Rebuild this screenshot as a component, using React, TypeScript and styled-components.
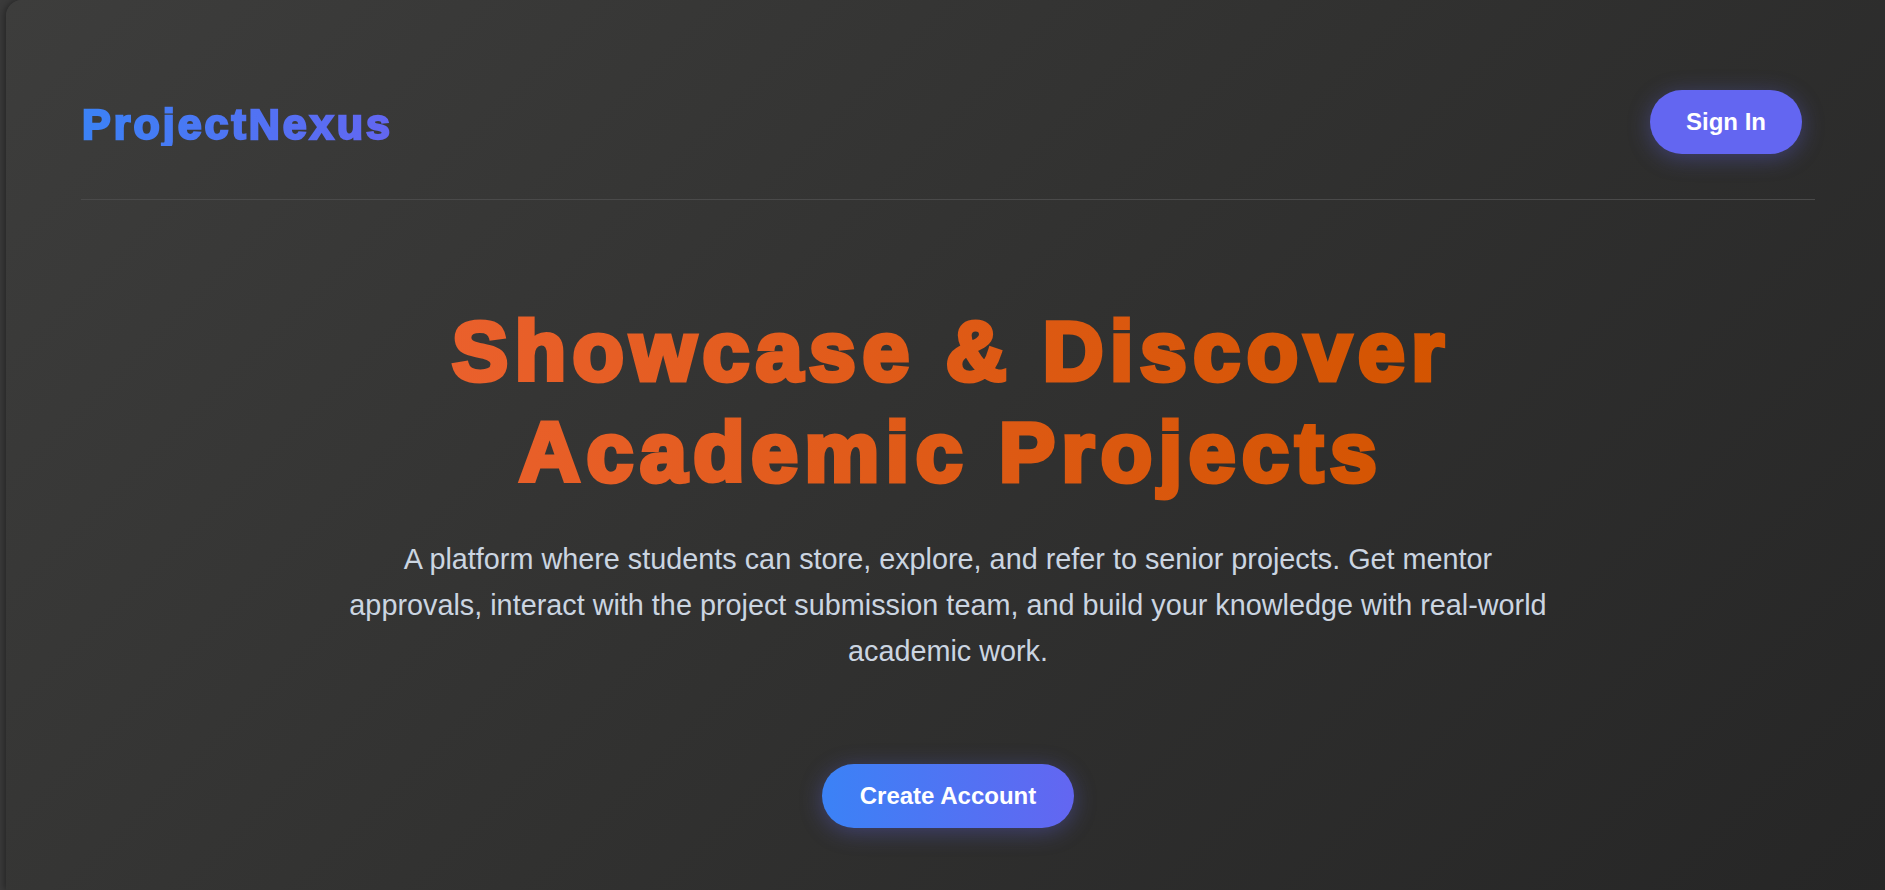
import React from "react";
import styled, { createGlobalStyle } from "styled-components";

const GlobalStyle = createGlobalStyle`
  html, body {
    margin: 0;
    padding: 0;
    overflow: hidden;
    background: #3a3a3a;
  }
  * { box-sizing: border-box; }
`;

const Page = styled.div`
  margin-left: 6px;
  width: 1885px;
  min-height: 890px;
  border-radius: 16px 0 0 0;
  background: linear-gradient(135deg, #3d3d3c 0%, #313130 50%, #262626 100%);
  box-shadow: -2px 0 6px rgba(0, 0, 0, 0.35);
  padding: 0 76px 0 75px;
  font-family: "Liberation Sans", Arial, sans-serif;
`;

const Header = styled.header`
  display: flex;
  align-items: center;
  justify-content: space-between;
  padding: 90px 13px 45px 0;
  border-bottom: 1px solid #4a4a4a;
`;

const Logo = styled.div`
  font-size: 43px;
  font-weight: 700;
  letter-spacing: 3px;
  line-height: 1;
  margin-top: 4px;
  padding-left: 1px;
  background: linear-gradient(90deg, #3b82f6, #6366f1);
  -webkit-background-clip: text;
  background-clip: text;
  color: transparent;
  -webkit-text-stroke: 2.4px transparent;
`;

const PillButton = styled.button<{ $gradient?: boolean }>`
  font-family: "Liberation Sans", Arial, sans-serif;
  font-size: 24px;
  font-weight: 700;
  color: #ffffff;
  border: none;
  border-radius: 999px;
  height: 64px;
  padding: 0 ${(p) => (p.$gradient ? 38 : 36)}px;
  cursor: pointer;
  background: ${(p) =>
    p.$gradient ? "linear-gradient(90deg, #3b82f6, #6366f1)" : "#6366f1"};
  box-shadow: 0 4px 22px rgba(99, 102, 241, 0.35);
`;

const Hero = styled.section`
  display: flex;
  flex-direction: column;
  align-items: center;
  text-align: center;
  padding-top: 101px;
`;

const Title = styled.h1`
  margin: 0;
  font-size: 84px;
  font-weight: 700;
  line-height: 1.2;
  letter-spacing: 6.6px;
  padding-left: 6.6px;
  background: linear-gradient(90deg, #ea602c, #d35400);
  -webkit-background-clip: text;
  background-clip: text;
  color: transparent;
  -webkit-text-stroke: 5px transparent;
`;

const Lead = styled.p`
  margin: 33px 0 0;
  max-width: 1230px;
  font-size: 28.8px;
  line-height: 1.61;
  color: #cbd5e1;
`;

const Actions = styled.div`
  margin-top: 89px;
  display: flex;
  justify-content: center;
`;

export default function App() {
  return (
    <>
      <GlobalStyle />
      <Page>
        <Header>
          <Logo>ProjectNexus</Logo>
          <PillButton>Sign In</PillButton>
        </Header>
        <Hero>
          <Title>
            Showcase &amp; Discover
            <br />
            Academic Projects
          </Title>
          <Lead>
            A platform where students can store, explore, and refer to senior
            projects. Get mentor
            <br />
            approvals, interact with the project submission team, and build your
            knowledge with real-world academic work.
          </Lead>
          <Actions>
            <PillButton $gradient>Create Account</PillButton>
          </Actions>
        </Hero>
      </Page>
    </>
  );
}
